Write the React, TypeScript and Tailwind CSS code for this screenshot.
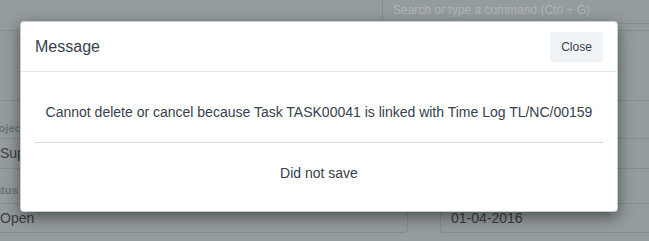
import React from "react";

export default function App() {
  return (
    <div
      className="relative w-[649px] h-[241px] overflow-hidden bg-[#959c9e]"
      style={{ fontFamily: '"Liberation Sans", Arial, sans-serif' }}
    >
      {/* Backdrop page */}
      <div className="h-[31px] border-b border-[#878e90] flex justify-end">
        <div className="w-[267px] h-[24px] border-l border-b border-[#878e90] pl-[10px] text-[12px] leading-[20px] text-[#aeb4b6]">
          Search or type a command (Ctrl + G)
        </div>
      </div>
      <div className="h-[70px] border-b border-[#878e90]" />
      <div className="flex ml-[-13px] gap-[32px]">
        <div className="w-[421px] shrink-0">
          <div className="h-[37px] pt-[19px] text-[11px] leading-[16px] font-bold text-[#6c7376]">Project</div>
          <div className="h-[31px] border border-[#878e90] rounded-[4px] pl-[12px] text-[14px] leading-[29px] text-[#3b4043]">
            Support
          </div>
          <div className="h-[34px] pt-[13px] text-[11px] leading-[16px] font-bold text-[#6c7376] ml-[-3px]">Status</div>
          <div className="h-[30px] border border-[#878e90] rounded-[4px] pl-[12px] text-[14px] leading-[28px] text-[#3b4043]">
            Open
          </div>
        </div>
        <div className="flex-1">
          <div className="h-[37px] pt-[19px] text-[11px] leading-[16px] font-bold text-[#6c7376]">Expected Start Date</div>
          <div className="h-[31px] border border-r-0 border-[#878e90] rounded-l-[4px]" />
          <div className="h-[34px] pt-[13px] text-[11px] leading-[16px] font-bold text-[#6c7376]">Expected End Date</div>
          <div className="h-[30px] border border-r-0 border-[#878e90] rounded-l-[4px] pl-[10px] text-[14px] leading-[28px] text-[#3b4043]">
            01-04-2016
          </div>
        </div>
      </div>

      {/* Modal */}
      <div className="absolute left-[20px] top-[21px] w-[598px] h-[191px] bg-white rounded-[4px] border border-[rgba(0,0,0,0.2)] shadow-[0_5px_15px_rgba(0,0,0,0.5)] text-[#36414c]">
        <div className="h-[50px] pl-[14px] pr-[14px] flex items-center justify-between border-b border-[#e5e9ec]">
          <div className="text-[16px] leading-[20px]">Message</div>
          <button className="w-[53px] h-[30px] rounded-[3px] bg-[#f0f4f7] text-[12px] text-[#36414c]">
            Close
          </button>
        </div>
        <div className="pt-[30px] text-center">
          <div className="text-[14px] leading-[20px]">
            Cannot delete or cancel because Task TASK00041 is linked with Time Log TL/NC/00159
          </div>
          <div className="mx-[14px] mt-[20px] border-t border-[#d1d8dd]" />
          <div className="mt-[20px] text-[14px] leading-[20px]">Did not save</div>
        </div>
      </div>
    </div>
  );
}
